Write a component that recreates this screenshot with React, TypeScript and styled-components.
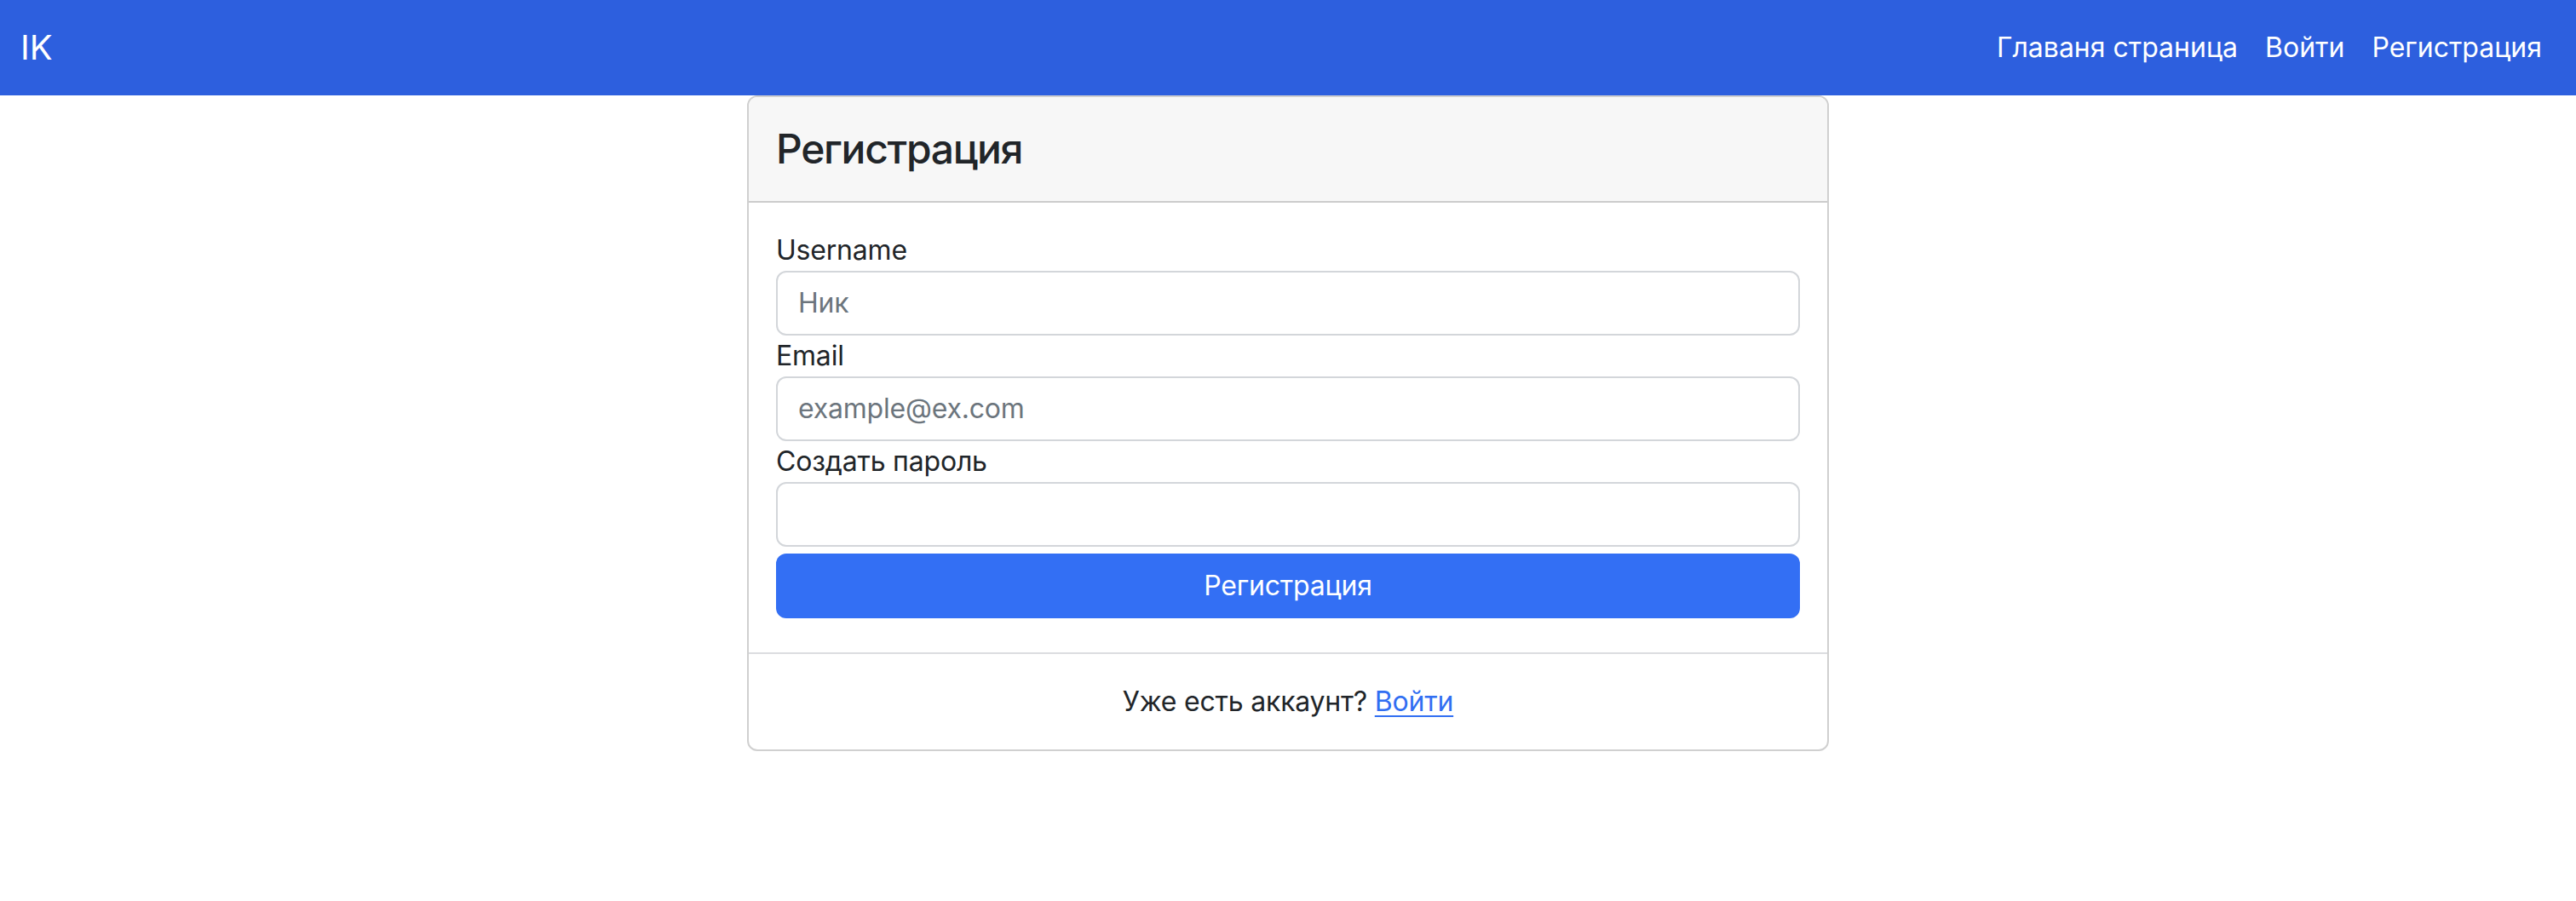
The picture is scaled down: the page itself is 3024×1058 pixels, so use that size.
import React from "react";
import styled, { createGlobalStyle } from "styled-components";

const GlobalStyle = createGlobalStyle`
  * { box-sizing: border-box; }
  html, body { margin: 0; padding: 0; background: #ffffff; }
  body {
    font-family: Inter, "Noto Sans", "Liberation Sans", sans-serif;
    color: #212529;
  }
`;

const NavBar = styled.nav`
  height: 112px;
  background: #2d5fde;
  display: flex;
  align-items: center;
  justify-content: space-between;
  padding: 0 24px;
`;

const Brand = styled.a`
  color: #ffffff;
  font-size: 40px;
  line-height: 60px;
  text-decoration: none;
  padding: 10px 0;
`;

const NavLinks = styled.ul`
  display: flex;
  list-style: none;
  margin: 0;
  padding: 0;
`;

const NavLink = styled.a`
  display: block;
  color: #ffffff;
  font-size: 32px;
  line-height: 48px;
  padding: 8px 16px;
  text-decoration: none;
  letter-spacing: 0;
`;

const Main = styled.main`
  display: flex;
  justify-content: center;
`;

const Card = styled.section`
  width: 1270px;
  border: 2px solid #d0d0d0;
  border-radius: 12px;
  overflow: hidden;
  background: #ffffff;
`;

const CardHeader = styled.header`
  background: #f7f7f7;
  padding: 32px;
  border-bottom: 2px solid #cccccc;
`;

const Title = styled.h4`
  margin: 0;
  font-size: 48px;
  line-height: 57.6px;
  font-weight: 500;
  color: #212529;
  letter-spacing: -1.3px;
`;

const CardBody = styled.form`
  padding: 32px 32px 40px;
  display: flex;
  flex-direction: column;
`;

const Label = styled.label`
  display: block;
  font-size: 32px;
  line-height: 48px;
  color: #212529;
  letter-spacing: -0.2px;
`;

const Input = styled.input`
  display: block;
  width: 100%;
  height: 76px;
  padding: 12px 24px;
  font-family: inherit;
  font-size: 32px;
  line-height: 48px;
  color: #212529;
  border: 2px solid #d3d6da;
  border-radius: 12px;
  outline: none;
  background: #ffffff;
  letter-spacing: -0.2px;

  &::placeholder {
    color: #6c757d;
  }
`;

const SubmitButton = styled.button`
  margin-top: 8px;
  width: 100%;
  height: 76px;
  border: none;
  border-radius: 12px;
  background: #336ff4;
  color: #ffffff;
  font-family: inherit;
  font-size: 32px;
  line-height: 48px;
  cursor: pointer;
  letter-spacing: -0.2px;
`;

const CardFooter = styled.footer`
  border-top: 2px solid #dcdde0;
  padding: 32px;
  text-align: center;
  font-size: 32px;
  line-height: 48px;
  color: #212529;
  letter-spacing: -0.2px;
`;

const FooterLink = styled.a`
  color: #316ef2;
  text-decoration: underline;
  text-underline-offset: 5px;
  text-decoration-thickness: 2px;
`;

export default function App() {
  return (
    <>
      <GlobalStyle />
      <NavBar>
        <Brand href="#">IK</Brand>
        <NavLinks>
          <li><NavLink href="#">Главаня страница</NavLink></li>
          <li><NavLink href="#">Войти</NavLink></li>
          <li><NavLink href="#">Регистрация</NavLink></li>
        </NavLinks>
      </NavBar>
      <Main>
        <Card>
          <CardHeader>
            <Title>Регистрация</Title>
          </CardHeader>
          <CardBody onSubmit={(e) => e.preventDefault()}>
            <Label htmlFor="username">Username</Label>
            <Input id="username" type="text" placeholder="Ник" />
            <Label htmlFor="email">Email</Label>
            <Input id="email" type="email" placeholder="example@ex.com" />
            <Label htmlFor="password">Создать пароль</Label>
            <Input id="password" type="password" />
            <SubmitButton type="submit">Регистрация</SubmitButton>
          </CardBody>
          <CardFooter>
            Уже есть аккаунт? <FooterLink href="#">Войти</FooterLink>
          </CardFooter>
        </Card>
      </Main>
    </>
  );
}
